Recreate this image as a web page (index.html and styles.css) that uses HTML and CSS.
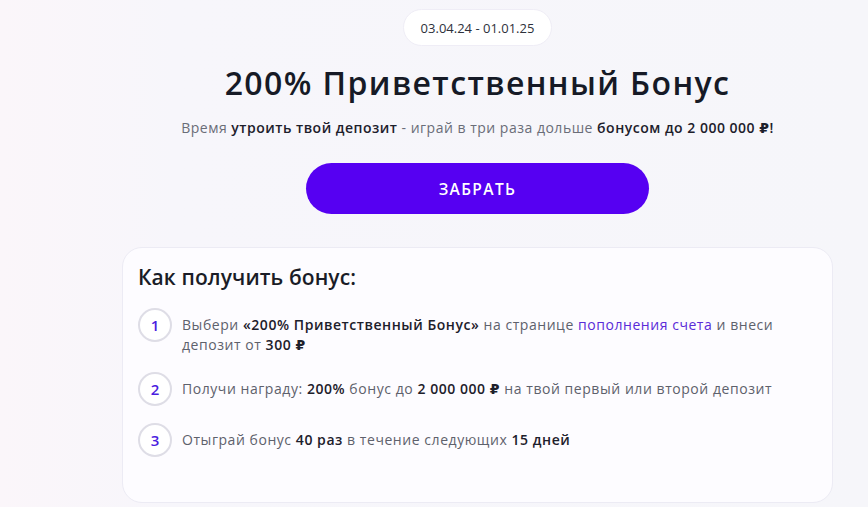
FILE: index.html
```html
<!DOCTYPE html>
<html lang="ru">
<head>
<meta charset="utf-8">
<link rel="stylesheet" href="styles.css">
</head>
<body>
<main class="page">
  <div class="dates">03.04.24 - 01.01.25</div>
  <h1 class="title">200% Приветственный Бонус</h1>
  <p class="lead">Время <b>утроить твой депозит</b> - играй в три раза дольше <b>бонусом до 2&nbsp;000&nbsp;000&nbsp;₽!</b></p>
  <button class="cta">ЗАБРАТЬ</button>
  <section class="card">
    <h2 class="card-title">Как получить бонус:</h2>
    <ol class="steps">
      <li class="step">
        <span class="num">1</span>
        <p class="step-text">Выбери <b>«200% Приветственный Бонус»</b> на странице <a class="link" href="#">пополнения счета</a> и внеси депозит от <b>300 ₽</b></p>
      </li>
      <li class="step">
        <span class="num">2</span>
        <p class="step-text">Получи награду: <b>200%</b> бонус до <b>2&nbsp;000&nbsp;000&nbsp;₽</b> на твой первый или второй депозит</p>
      </li>
      <li class="step">
        <span class="num">3</span>
        <p class="step-text">Отыграй бонус <b>40 раз</b> в течение следующих <b>15 дней</b></p>
      </li>
    </ol>
  </section>
</main>
</body>
</html>
```
FILE: styles.css
```css
* { box-sizing: border-box; }
html, body { margin: 0; height: 100%; }
body {
  font-family: "Open Sans", "DejaVu Sans", sans-serif;
  background: linear-gradient(90deg, #fbf6fa 0%, #f7f6fb 20%, #f6f6fa 100%);
  color: #1a1d28;
  overflow: hidden;
}
.page {
  display: flex;
  flex-direction: column;
  align-items: center;
  padding: 9px 0 0 87px;
}
.dates {
  height: 37px;
  padding: 0 17px;
  border-radius: 19px;
  background: #ffffff;
  border: 1px solid #efedf6;
  display: flex;
  align-items: center;
  justify-content: center;
  white-space: nowrap;
  font-size: 13px;
  color: #2e313b;
}
.title {
  margin: 17px 0 0;
  font-size: 32px;
  line-height: 40px;
  font-weight: 600;
  color: #161a26;
  letter-spacing: 1.4px;
  white-space: nowrap;
}
.lead {
  margin: 15px 0 0;
  font-size: 14px;
  line-height: 20px;
  letter-spacing: 0.5px;
  color: #6a6d78;
  white-space: nowrap;
}
.lead b { color: #1d202b; font-weight: 600; }
.cta {
  margin-top: 25px;
  width: 343px;
  height: 51px;
  border: 0;
  border-radius: 26px;
  background: #5600f2;
  color: #ffffff;
  font-family: inherit;
  font-size: 15.5px;
  font-weight: 600;
  letter-spacing: 1.4px;
}
.card {
  margin-top: 33px;
  width: 711px;
  height: 256px;
  background: #fdfcff;
  border: 1px solid #ecebf4;
  border-radius: 20px;
  padding: 17px 15px 0;
}
.card-title {
  margin: 0 0 19px;
  font-size: 21px;
  line-height: 24px;
  font-weight: 600;
  letter-spacing: 0.1px;
  color: #1a1c27;
}
.steps {
  list-style: none;
  margin: 0;
  padding: 0;
  display: flex;
  flex-direction: column;
  gap: 17px;
}
.step {
  display: flex;
  align-items: flex-start;
  gap: 10px;
}
.num {
  flex: none;
  width: 34px;
  height: 34px;
  border-radius: 50%;
  border: 2px solid #dedde6;
  background: #ffffff;
  display: flex;
  align-items: center;
  justify-content: center;
  font-size: 15px;
  font-weight: 600;
  color: #4b1ee0;
}
.step-text {
  margin: 7px 0 0;
  font-size: 14px;
  line-height: 20px;
  letter-spacing: 0.55px;
  color: #5e616c;
  max-width: 612px;
}
.step-text b { color: #1d202b; font-weight: 600; }
.link { color: #5a2bd8; text-decoration: none; }
```
